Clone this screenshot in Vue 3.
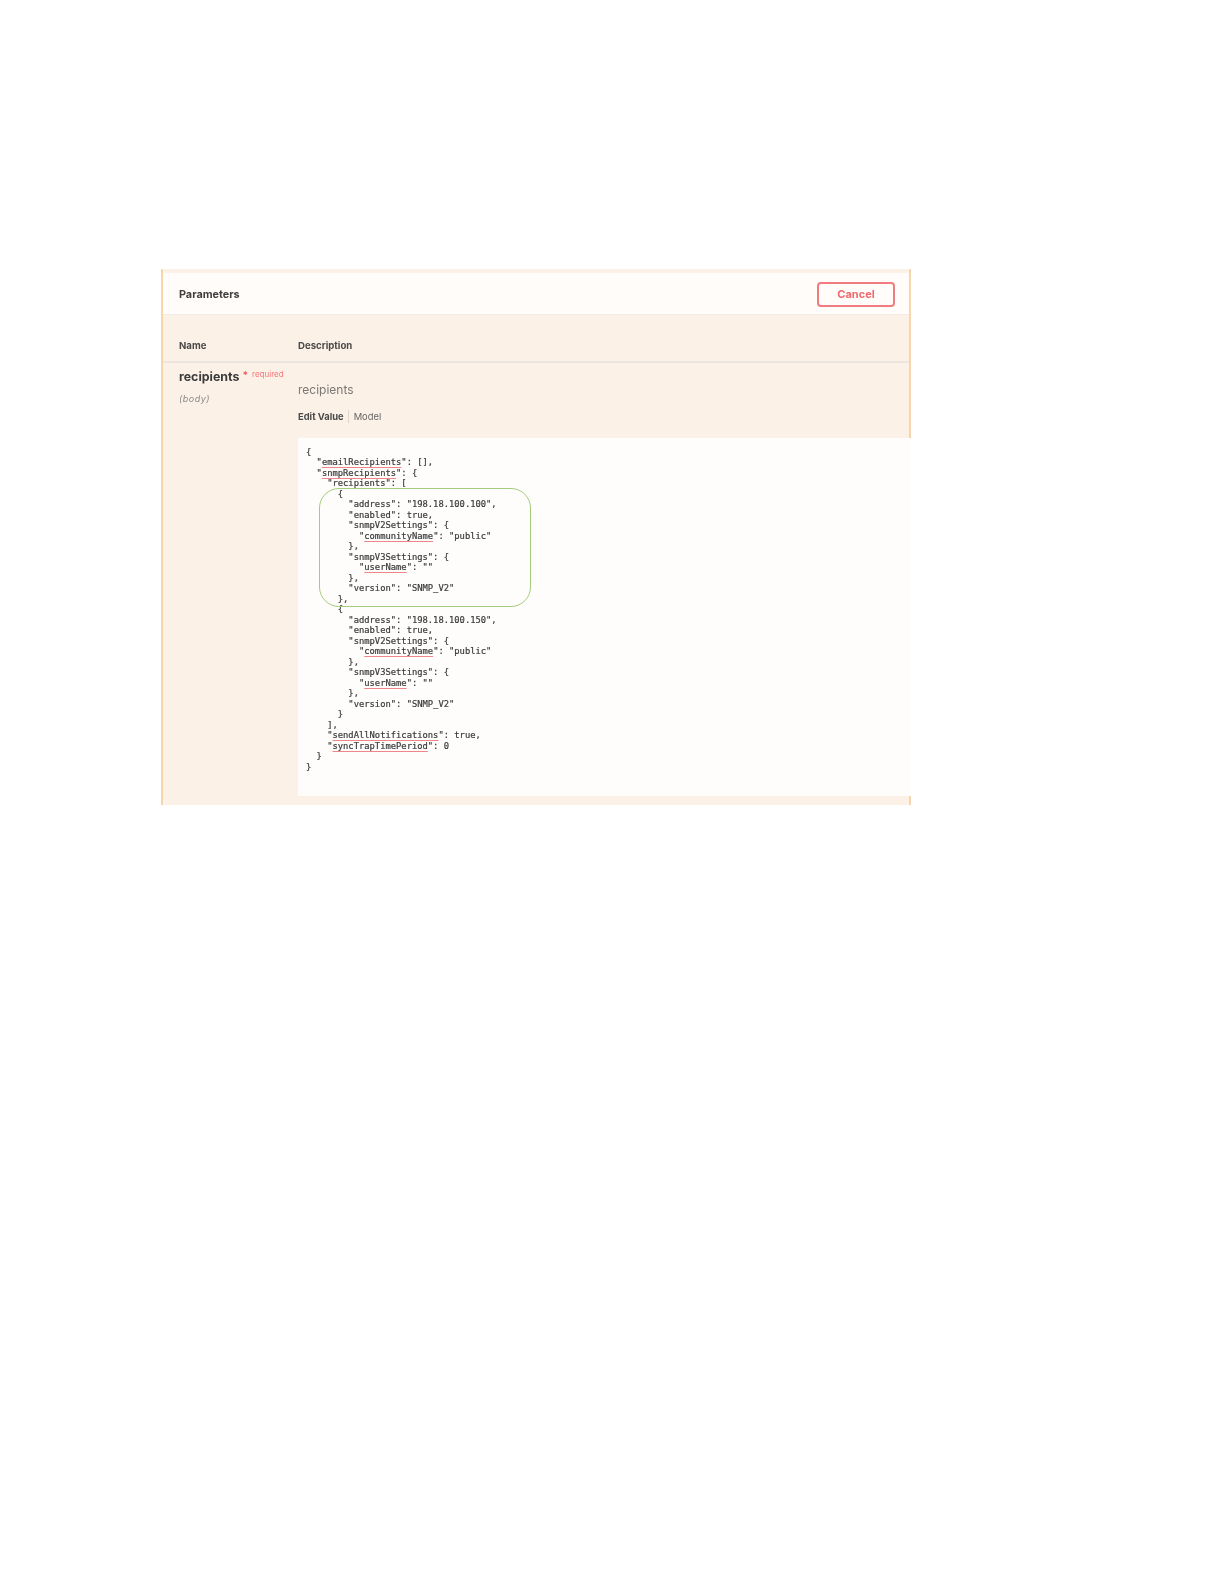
<template>
  <main class="page">
    <section class="panel">
      <header class="head">
        <h4 class="title">Parameters</h4>
        <button class="cancel" type="button">Cancel</button>
      </header>
      <div class="cols">
        <div class="col-name">Name</div>
        <div class="col-desc">Description</div>
      </div>
      <div class="row">
        <div class="param">
          <div class="param-name">recipients<span class="star">*</span><span class="req">required</span></div>
          <div class="param-in">(body)</div>
        </div>
        <div class="desc">
          <p class="desc-text">recipients</p>
          <div class="tabs"><span class="tab-on">Edit Value</span><span class="tab">Model</span></div>
          <div class="code">
            <div class="highlight"></div>
            <pre class="json"><template v-for="(line, i) in lines" :key="i"><span v-for="(seg, j) in line" :key="j" :class="{ sq: seg.s }">{{ seg.t }}</span>{{ '\n' }}</template></pre>
          </div>
        </div>
      </div>
    </section>
  </main>
</template>

<script setup>
const mark = (str) =>
  str.split('~').map((t, i) => ({ t, s: i % 2 === 1 }))

const lines = [
  '{',
  '  "~emailRecipients~": [],',
  '  "~snmpRecipients~": {',
  '    "recipients": [',
  '      {',
  '        "address": "198.18.100.100",',
  '        "enabled": true,',
  '        "snmpV2Settings": {',
  '          "~communityName~": "public"',
  '        },',
  '        "snmpV3Settings": {',
  '          "~userName~": ""',
  '        },',
  '        "version": "SNMP_V2"',
  '      },',
  '      {',
  '        "address": "198.18.100.150",',
  '        "enabled": true,',
  '        "snmpV2Settings": {',
  '          "~communityName~": "public"',
  '        },',
  '        "snmpV3Settings": {',
  '          "~userName~": ""',
  '        },',
  '        "version": "SNMP_V2"',
  '      }',
  '    ],',
  '    "~sendAllNotifications~": true,',
  '    "~syncTrapTimePeriod~": 0',
  '  }',
  '}'
].map(mark)
</script>

<style>
html, body { margin: 0; background: #fff; }
</style>

<style scoped>
.page {
  height: 1584px;
  padding: 269px 0 0 161px;
  box-sizing: border-box;
  font-family: "Inter", "Liberation Sans", sans-serif;
  filter: blur(0.6px);
}
.panel {
  width: 750px;
  height: 536px;
  box-sizing: border-box;
  background: #fbf1e6;
  border-left: 2px solid #f8d6ab;
  border-right: 2px solid #f8d6ab;
  padding-top: 4px;
  display: flex;
  flex-direction: column;
}
.head {
  height: 42px;
  background: #fffcfa;
  border-bottom: 1px solid #f1ebe4;
  box-sizing: border-box;
  padding: 0 16px 0 16px;
  display: flex;
  align-items: center;
  justify-content: space-between;
}
.title {
  margin: 2px 0 0;
  font-size: 10.8px;
  font-weight: 700;
  color: #3f3f3f;
}
.cancel {
  width: 78px;
  height: 25px;
  margin-top: 1px;
  margin-right: -2px;
  box-sizing: border-box;
  border: 2px solid #f17c80;
  border-radius: 4px;
  background: #fffcfa;
  color: #f0696d;
  font: 700 11px "Inter", "Liberation Sans", sans-serif;
  padding: 0;
}
.cols {
  height: 48px;
  box-sizing: border-box;
  border-bottom: 2px solid #ebe5dd;
  display: grid;
  grid-template-columns: 119px 1fr;
  padding-left: 16px;
  align-items: center;
  padding-top: 15px;
  font-size: 9.6px;
  font-weight: 700;
  color: #4a4a4a;
}
.row {
  flex: 1;
  display: grid;
  grid-template-columns: 119px 1fr;
  padding-left: 16px;
  min-height: 0;
}
.param-name {
  margin-top: 6px;
  font-size: 12.4px;
  line-height: 16px;
  font-weight: 700;
  color: #3b3b3b;
  display: flex;
}
.star {
  color: #f2595e;
  font-size: 10px;
  margin-left: 3px;
  line-height: 12px;
}
.req {
  color: #f5777b;
  font-size: 8px;
  font-weight: 400;
  margin-left: 4px;
  line-height: 11px;
}
.param-in {
  margin-top: 8px;
  font-size: 9px;
  letter-spacing: 0.5px;
  line-height: 12px;
  font-style: italic;
  color: #8a8a8a;
}
.desc {
  display: flex;
  flex-direction: column;
  min-width: 0;
}
.desc-text {
  margin: 19px 0 0;
  font-size: 12px;
  line-height: 16px;
  color: #7b7876;
}
.tabs {
  margin-top: 12px;
  height: 13px;
  display: flex;
  align-items: center;
  font-size: 9.4px;
  color: #666;
}
.tab-on {
  font-weight: 700;
  color: #4a4a4a;
  padding-right: 4px;
  border-right: 1px solid #ddd6cd;
  line-height: 13px;
}
.tab { padding-left: 5px; }
.code {
  position: relative;
  margin-top: 15px;
  margin-right: -2px;
  height: 358px;
  background: #fffdfb;
  box-sizing: border-box;
  padding: 9px 0 0 8px;
}
.json {
  margin: 0;
  font-family: "DejaVu Sans Mono", "Liberation Mono", monospace;
  font-size: 8.8px;
  line-height: 10.48px;
  color: #3a3a3a;
  -webkit-text-stroke: 0.2px #3a3a3a;
}
.sq {
  text-decoration: underline solid #f08589 1px;
  text-underline-offset: 1.5px;
}
.highlight {
  position: absolute;
  left: 21px;
  top: 50px;
  width: 212px;
  height: 119px;
  box-sizing: border-box;
  border: 1.5px solid #a3cd7c;
  border-radius: 20px;
}
</style>
